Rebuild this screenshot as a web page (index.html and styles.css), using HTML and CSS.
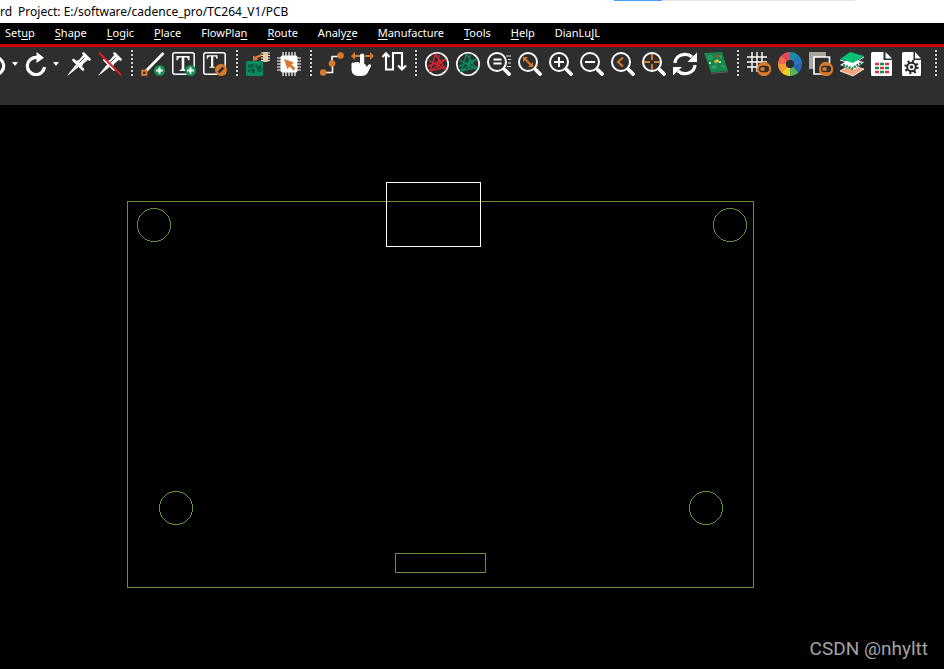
FILE: index.html
```html
<!DOCTYPE html>
<html lang="en">
<head>
<meta charset="utf-8">
<title>Project: E:/software/cadence_pro/TC264_V1/PCB</title>
<link rel="stylesheet" href="styles.css">
</head>
<body>
<header class="titlebar">
  <span>rd</span><span>Project: E:/software/cadence_pro/TC264_V1/PCB</span>
  <div class="progress"><i></i></div>
</header>
<nav class="menubar">
  <button>Set<u>u</u>p</button>
  <button><u>S</u>hape</button>
  <button><u>L</u>ogic</button>
  <button><u>P</u>lace</button>
  <button>FlowPla<u>n</u></button>
  <button><u>R</u>oute</button>
  <button>Analy<u>z</u>e</button>
  <button><u>M</u>anufacture</button>
  <button><u>T</u>ools</button>
  <button><u>H</u>elp</button>
  <button>DianLu<u>J</u>L</button>
</nav>
<svg class="defs" aria-hidden="true">
  <symbol id="lens" viewBox="0 0 24 24"><circle cx="10" cy="10" r="9" fill="none" stroke="#fff" stroke-width="2"/><path d="M16 16l2 2" stroke="#fff" stroke-width="2"/><path d="M18 18l4 4" stroke="#fff" stroke-width="3.800" stroke-linecap="round"/></symbol>
  <symbol id="pin" viewBox="0 0 24 24"><path d="M.8 23.200L9 13l2 2z" fill="#fff" stroke="#fff" stroke-width=".8"/><path d="M7.500 9.500L12 8l5-6 5 5-6 5-1.500 5z" fill="#fff"/><path d="M6.500 8L16 17.500M16.500 1.500l6 6" stroke="#fff" stroke-width="2.500" stroke-linecap="round"/><path d="M12.500 10.500l5-5" stroke="#2e2e2e" stroke-width=".9"/></symbol>
  <symbol id="star" viewBox="0 0 24 24"><circle cx="12" cy="12" r="11.200" fill="none" stroke="#fff" stroke-width="1.600"/><path d="M10.500 2L5 19L21 7M10.500 2L20 17L4 8.500M14 3l-1.500 13M2.500 14.500L21 7M5 19l16-4" fill="none" stroke="currentColor" stroke-width="1.500"/></symbol>
  <symbol id="plus" viewBox="0 0 24 24"><circle cx="18.500" cy="18.500" r="5.500" fill="#169154"/><path d="M15.200 18.500h6.600M18.500 15.200v6.600" stroke="#fff" stroke-width="1.900"/></symbol>
  <symbol id="eye" viewBox="0 0 24 24"><circle cx="17" cy="17" r="7.200" fill="#d9792b"/><rect x="12.500" y="14.500" width="9" height="5" rx="2.500" fill="none" stroke="#2e2e2e" stroke-width="1.300"/><path d="M17.500 14.500H19a2.500 2.500 0 0 1 0 5h-1.500z" fill="#2e2e2e"/></symbol>
  <symbol id="turn" viewBox="0 0 24 24"><path d="M13 5.500A8.600 8.600 0 1 0 20.500 15" fill="none" stroke="#fff" stroke-width="3.200"/><path d="M12.500 0l7.500 5.700-7.500 5.300z" fill="#fff"/></symbol>
  <symbol id="letter" viewBox="0 0 24 24"><path d="M4.500 4h13v4.200h-1.200L15 5.500h-2.700v11.800l2 .7v1H7.700v-1l2-.7V5.500H7L5.700 8.200H4.500z" fill="#fff"/></symbol>
</svg>
<div class="toolarea">
<div class="toolbar" role="toolbar" aria-label="Layout tools">
  <div class="split"><button aria-label="Undo"><svg viewBox="0 0 24 24"><path d="M11 5.500A8.600 8.600 0 1 1 3.500 15" fill="none" stroke="#fff" stroke-width="3.200"/><path d="M11.500 0L4 5.700l7.500 5.300z" fill="#fff"/></svg></button><button class="drop" aria-label="Undo list"><svg viewBox="0 0 10 24"><path d="M5 10h6l-3 4z" fill="#fff"/></svg></button></div>
  <div class="split"><button aria-label="Redo"><svg><use href="#turn"/></svg></button><button class="drop" aria-label="Redo list"><svg viewBox="0 0 10 24"><path d="M5 10h6l-3 4z" fill="#fff"/></svg></button></div>
  <button class="pin" aria-label="Fix"><svg><use href="#pin"/></svg></button>
  <button aria-label="Unfix"><svg viewBox="0 0 24 24"><use href="#pin"/><path d="M1 .8L23 23" stroke="#d91f2a" stroke-width="2"/></svg></button>
  <span class="sep"></span>
  <button aria-label="Add line"><svg viewBox="0 0 24 24"><path d="M5 19L22.500 1" stroke="#fff" stroke-width="2.700"/><rect x="1.200" y="18.700" width="4.200" height="4.200" fill="#2e2e2e" stroke="#d9792b" stroke-width="2"/><use href="#plus"/></svg></button>
  <button aria-label="Add text"><svg viewBox="0 0 24 24"><rect x=".8" y=".8" width="21.400" height="21.400" rx="2" fill="none" stroke="#fff" stroke-width="1.500"/><use href="#letter"/><use href="#plus"/></svg></button>
  <button aria-label="Edit text"><svg viewBox="0 0 24 24"><rect x=".8" y=".8" width="21.400" height="21.400" rx="2" fill="none" stroke="#fff" stroke-width="1.500"/><use href="#letter" x="-1" y="0" width="22" height="20"/><circle cx="18" cy="18" r="6" fill="#d9792b"/><path d="M15.500 20.500l5-5" stroke="#2e2e2e" stroke-width="2.500"/></svg></button>
  <span class="sep"></span>
  <button aria-label="Place manual"><svg viewBox="0 0 24 24"><rect y="9" width="17" height="15" rx="1.500" fill="#078b5e"/><path d="M3 13h4v2H3zM10 12v3h4v-2M3 20v-2h4v3M8 21v-4M11 19h4v-3h-3v3" fill="none" stroke="#173f30" stroke-width="1.100"/><path d="M7 3.500V9l5.500-1.200-1.700-1.300L15 4.500V2L9 4.800z" fill="#d9792b"/><path d="M15 1h9M15 3.500h9M15 6h9M15 8.500h9" stroke="#fff"/><rect x="17" width="5" height="10" rx="1" fill="#e9ca97"/></svg></button>
  <button aria-label="Place component"><svg viewBox="0 0 24 24"><path d="M6 0v24M9 0v24M12 0v24M15 0v24M18 0v24M0 6h24M0 9h24M0 12h24M0 15h24M0 18h24" stroke="#fff" stroke-width="1.200"/><rect x="3.500" y="3.500" width="17" height="17" rx="2" fill="#fff"/><path d="M7 7l10 3.500-2.500 2 4 4-2 2-4-4-2 2.700z" fill="#d9792b"/></svg></button>
  <span class="sep"></span>
  <button aria-label="Add connect"><svg viewBox="0 0 24 24"><path d="M4 20.500h8.500V12M12 10V4.500h6" fill="none" stroke="#fff" stroke-width="1.600"/><g fill="#d9792b"><circle cx="3.200" cy="20.500" r="3.300"/><circle cx="12" cy="11.500" r="3.300"/><circle cx="20.500" cy="3.500" r="3.300"/></g></svg></button>
  <button aria-label="Slide"><svg viewBox="0 0 24 24"><path d="M0 4l4-4v3h5v2H4v3zM23 4l-4-4v3h-5v2h5v3z" fill="#d9792b"/><path d="M9 12V3.500a2 2 0 0 1 4.200 0V12c1 0 2 1 2.500 3l2-2.500c1.500-1 3 .3 2.300 1.800L16.500 21c-2 3-5 3-8.500 3-4 0-7.500-2-7.500-6.500V12C.5 10 3 10 3 11.500c0-2 3-2 3-.5 0-1.500 2.500-1.500 3 1z" fill="#fff"/></svg></button>
  <button aria-label="Delay tune"><svg viewBox="0 0 24 24"><path d="M4 2v15.500h7V1h9v15" fill="none" stroke="#fff" stroke-width="2.100"/><path d="M.5 5L4 1.200 7.500 5M16 13.500l4 4 4-4" fill="none" stroke="#fff" stroke-width="2.100"/></svg></button>
  <span class="sep"></span>
  <button class="red" aria-label="Unrats all"><svg><use href="#star"/></svg></button>
  <button class="green" aria-label="Rats all"><svg><use href="#star"/></svg></button>
  <button aria-label="Zoom by points"><svg viewBox="0 0 24 24"><use href="#lens"/><path d="M6.500 7.500h8M6.500 11.500h8" stroke="#fff" stroke-width="1.900"/><path d="M19 4h5M21 7.500h3M21 11h3M20 14.500h4" stroke="#ddd" stroke-width="1"/></svg></button>
  <button aria-label="Zoom fit"><svg viewBox="0 0 24 24"><use href="#lens"/><path d="M7 7l6 6" stroke="#d9792b" stroke-width="2"/><path d="M5 5h5l-5 5zM15 15h-5l5-5z" fill="#d9792b"/></svg></button>
  <button aria-label="Zoom in"><svg viewBox="0 0 24 24"><use href="#lens"/><path d="M5 10h10M10 5v10" stroke="#fff" stroke-width="2"/></svg></button>
  <button aria-label="Zoom out"><svg viewBox="0 0 24 24"><use href="#lens"/><path d="M5 10h10" stroke="#fff" stroke-width="2"/></svg></button>
  <button aria-label="Zoom previous"><svg viewBox="0 0 24 24"><use href="#lens"/><path d="M12 5.500L7 10l5 4.500" fill="none" stroke="#d9792b" stroke-width="2"/></svg></button>
  <button aria-label="Zoom center"><svg viewBox="0 0 24 24"><use href="#lens"/><path d="M2 10h6M12 10h6M10 2v6M10 12v6" stroke="#d9792b" stroke-width="1.900"/></svg></button>
  <button aria-label="Refresh"><svg viewBox="0 0 24 24"><path d="M2 11a10 9 0 0 1 17-6M22 13a10 9 0 0 1-17 6" fill="none" stroke="#fff" stroke-width="3.200"/><path d="M24 .5V10h-9.500zM0 23.500V15h9z" fill="#fff"/></svg></button>
  <button aria-label="3D canvas"><svg viewBox="0 0 24 24"><path d="M0 1l18-1 6 19-17 1.500z" fill="#13864b"/><path d="M7 20.500L24 19v1.500L7 22z" fill="#555"/><path d="M4 4h4v3H4zM8 14h4v2H8zM15 4h2v3M17 14h3v3" fill="none" stroke="#4fae7c" stroke-width=".8"/><path d="M10 9l4-2 1 3-4 1z" fill="#efc333"/><path d="M11 3h4v2h-4z" fill="#b94434"/><path d="M11 11h3v2h-3z" fill="#1b79b4"/><path d="M15 9h2v2h-2zM5 10h2v2H5z" fill="#b7e4b4"/></svg></button>
  <span class="sep"></span>
  <button aria-label="Grid toggle"><svg viewBox="0 0 24 24"><path d="M5 0v20M10 0v20M15 0v14M0 5h20M0 10h20M0 15h13" stroke="#fff" stroke-width="1.400"/><use href="#eye"/></svg></button>
  <button aria-label="Color"><svg viewBox="0 0 24 24"><g fill="none" stroke-width="8"><path d="M12 4a8 8 0 0 1 5.700 2.300" stroke="#188da9"/><path d="M17.700 6.300A8 8 0 0 1 20 12" stroke="#2675bd"/><path d="M20 12a8 8 0 0 1-2.300 5.700" stroke="#2865ad"/><path d="M17.700 17.700A8 8 0 0 1 12 20" stroke="#54b457"/><path d="M12 20a8 8 0 0 1-5.700-2.300" stroke="#f7ce22"/><path d="M6.300 17.700A8 8 0 0 1 4 12" stroke="#f39c32"/><path d="M4 12a8 8 0 0 1 2.300-5.700" stroke="#ed6b4d"/><path d="M6.300 6.300A8 8 0 0 1 12 4" stroke="#e54759"/></g><circle cx="12" cy="12" r="4" fill="#2e2e2e"/></svg></button>
  <button aria-label="Shadow toggle"><svg viewBox="0 0 24 24"><path d="M0 0h17v17H0z" fill="#aaa6a2"/><path d="M5 5h15.500v17H5z" fill="#2e2e2e" stroke="#fff" stroke-width="1.600"/><use href="#eye"/></svg></button>
  <button aria-label="Cross section"><svg viewBox="0 0 24 24"><path d="M0 19l10-6 14 4-11 7z" fill="#f0a477" stroke="#fff" stroke-width=".8"/><path d="M0 13l10-6 14 3-10 8z" fill="#fff"/><path d="M3 13l9 3.500L22 10.500" fill="none" stroke="#148355" stroke-width="2.500" stroke-dasharray="2 1"/><path d="M0 7l10-7 14 4-11 7z" fill="#06c275"/><path d="M0 8l13 4L24 5" fill="none" stroke="#fff" stroke-width="1"/></svg></button>
  <button aria-label="Reports"><svg viewBox="0 0 24 24"><path d="M1.500 0h11v8H21v14.500a1.500 1.500 0 0 1-1.500 1.500h-18A1.500 1.500 0 0 1 0 22.500v-21A1.500 1.500 0 0 1 1.500 0z" fill="#fff"/><path d="M14.500 0L21 6.500h-6.500z" fill="#fff"/><path d="M4 12h4M14 12h4M9 16h4M4 20h4M14 20h4" stroke="#d83437" stroke-width="2.400"/><path d="M9 12h4M4 16h4M14 16h4M9 20h4" stroke="#198552" stroke-width="2.400"/></svg></button>
  <button aria-label="Parameters"><svg viewBox="0 0 24 24"><path d="M1.500 0h10v8H19v14.500a1.500 1.500 0 0 1-1.500 1.500h-16A1.500 1.500 0 0 1 0 22.500v-21A1.500 1.500 0 0 1 1.500 0z" fill="#fff"/><path d="M13 0l6 6.500h-6z" fill="#fff"/><circle cx="9.500" cy="15" r="4.300" fill="none" stroke="#272727" stroke-width="2"/><circle cx="9.500" cy="15" r="6" fill="none" stroke="#272727" stroke-width="2.400" stroke-dasharray="2 2.710"/><circle cx="9.500" cy="15" r="1.800" fill="#272727"/></svg></button>
  <span class="sep"></span>
</div>
</div>
<main class="canvas">
  <svg class="board" role="img" aria-label="Board outline with four mounting holes">
    <g class="outline">
      <rect x="127.500" y="96.500" width="626" height="386"/>
      <circle cx="154" cy="120" r="16.500"/>
      <circle cx="730" cy="120" r="16.500"/>
      <circle cx="176" cy="403" r="16.500"/>
      <circle cx="706" cy="403" r="16.500"/>
      <rect x="395.500" y="448.500" width="90" height="19"/>
      <rect class="selected" x="386.500" y="77.500" width="94" height="64"/>
    </g>
  </svg>
  <p class="credit">CSDN @nhyltt</p>
</main>
</body>
</html>
```
FILE: styles.css
```css
* { box-sizing: border-box; }
body {
  margin: 0;
  min-height: 100vh;
  display: flex;
  flex-direction: column;
  background: #000;
  color: #fff;
  font-family: "Noto Sans", "Open Sans", sans-serif;
  overflow: hidden;
}
button {
  margin: 0;
  padding: 0;
  border: 0;
  background: none;
  color: inherit;
  font: inherit;
}
.defs { position: absolute; width: 0; height: 0; }
.titlebar {
  position: relative;
  display: flex;
  gap: 6px;
  height: 23px;
  background: #fff;
  color: #000;
  font-size: 12px;
  line-height: 23px;
  white-space: pre;
}
.progress {
  position: absolute;
  top: 0;
  left: 614px;
  width: 241px;
  height: 1px;
  background: #e5e5e5;
}
.progress i { display: block; width: 20%; height: 1px; background: #409eff; }
.menubar {
  display: flex;
  gap: 20px;
  height: 21px;
  padding-left: 5px;
  font-size: 11px;
  line-height: 19px;
}
.menubar button { height: 19px; }
.menubar u { text-underline-offset: 2px; text-decoration-skip-ink: none; }
.toolarea {
  height: 61px;
  border-top: 3px solid #cd0000;
  background: #2e2e2e;
  overflow: hidden;
}
.toolbar {
  display: flex;
  gap: 7px;
  margin-left: -17px;
  padding-top: 5px;
}
.toolbar button { flex: none; width: 24px; height: 24px; }
.toolbar svg { display: block; width: 100%; height: 100%; overflow: visible; }
.toolbar .drop { width: 10px; }
.toolbar .pin { margin-left: 2px; }
.split { display: flex; flex: none; }
.red { color: #d2232c; }
.green { color: #078b5e; }
.sep {
  flex: none;
  width: 5px;
  height: 26px;
  margin-top: -2px;
  background: repeating-linear-gradient(#d0d0d0 0 2px, transparent 2px 4px) 2px 0 / 2px 100% no-repeat;
}
.canvas {
  position: relative;
  flex: 1;
  display: flex;
  background: #000;
}
.board { flex: 1; min-width: 0; }
.outline {
  fill: none;
  stroke: #678f37;
  shape-rendering: crispEdges;
}
.outline .selected { stroke: #fff; }
.credit {
  position: absolute;
  right: 16px;
  bottom: 8px;
  margin: 0;
  color: #a3a3a3;
  font-family: Roboto, sans-serif;
  font-size: 19px;
  line-height: 24px;
}
```
